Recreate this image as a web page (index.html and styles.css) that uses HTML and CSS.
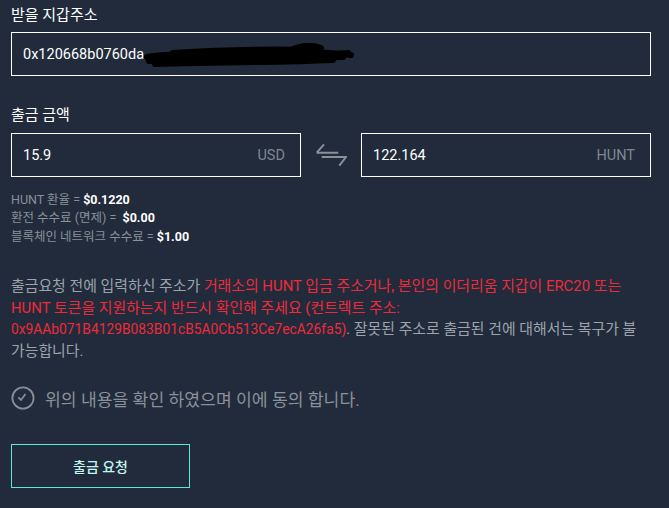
FILE: index.html
```html
<!DOCTYPE html>
<html lang="ko">
<head>
<meta charset="utf-8">
<link rel="stylesheet" href="styles.css">
</head>
<body>
<div class="page">
  <div class="label">받을 지갑주소</div>
  <div class="field wide">
    <span class="value">0x120668b0760da</span>
    <svg class="redact" width="215" height="26" viewBox="0 0 215 26">
      <path d="M4 14 C40 9, 80 11, 120 10 S180 8, 208 12 M6 18 C50 15, 110 17, 200 14 M12 21 C60 19, 120 20, 190 17 M30 10 C80 7,130 6,170 7 M150 6 C160 2, 170 2, 178 5 M20 16 C70 13, 140 14, 205 10" stroke="#000" stroke-width="6" fill="none" stroke-linecap="round"/>
    </svg>
  </div>

  <div class="label second">출금 금액</div>
  <div class="amounts">
    <div class="field half"><span class="value">15.9</span><span class="unit">USD</span></div>
    <svg class="swap" width="31" height="24" viewBox="0 0 31 24">
      <path d="M0.7 9.7 L8 1.3 M0.7 9.7 H22.3 M5.7 14 H30 L23.3 22.7" stroke="#8a9199" stroke-width="2" fill="none"/>
    </svg>
    <div class="field half"><span class="value">122.164</span><span class="unit">HUNT</span></div>
  </div>

  <div class="info">
    <div>HUNT 환율 = <b>$0.1220</b></div>
    <div>환전 수수료 (면제) =&nbsp; <b>$0.00</b></div>
    <div>블록체인 네트워크 수수료 = <b>$1.00</b></div>
  </div>

  <p class="warning">출금요청 전에 입력하신 주소가 <span class="red">거래소의 HUNT 입금 주소거나, 본인의 이더리움 지갑이 ERC20 또는<br>HUNT 토큰을 지원하는지 반드시 확인해 주세요 (컨트렉트 주소:<br><span class="addr">0x9AAb071B4129B083B01cB5A0Cb513Ce7ecA26fa5)</span></span>. 잘못된 주소로 출금된 건에 대해서는 복구가 불<br>가능합니다.</p>

  <div class="agree">
    <svg width="24" height="24" viewBox="0 0 24 24">
      <circle cx="12" cy="12" r="10.6" stroke="#868d96" stroke-width="1.8" fill="none"/>
      <path d="M7.3 11.3 L10 14 L14.5 8" stroke="#868d96" stroke-width="1.8" fill="none"/>
    </svg>
    <span>위의 내용을 확인 하였으며 이에 동의 합니다.</span>
  </div>

  <button class="submit">출금 요청</button>
</div>
</body>
</html>
```

FILE: styles.css
```css
html, body {
  margin: 0;
  background: #212b3c;
}
body {
  font-family: Roboto, "Noto Sans CJK KR", sans-serif;
  color: #fff;
}
.page {
  padding: 5px 11px 0 11px;
  width: 640px;
}
.label {
  font-size: 15px;
  line-height: 20px;
  height: 20px;
}
.label.second {
  margin-top: 29px;
}
.field {
  box-sizing: border-box;
  border: 1px solid #fff;
  height: 44px;
  display: flex;
  align-items: center;
  padding: 0 15px 0 11px;
  font-size: 14.5px;
}
.field.wide {
  margin-top: 7px;
  position: relative;
}
.redact {
  position: absolute;
  left: 131px;
  top: 10px;
}
.amounts {
  margin-top: 8px;
  display: flex;
  align-items: center;
  justify-content: space-between;
}
.field.half {
  width: 290px;
  justify-content: space-between;
}
.unit {
  color: #7f8790;
}
.info {
  margin-top: 13.6px;
  font-size: 12.5px;
  line-height: 18.7px;
  color: #8a9199;
}
.info b {
  color: #fff;
}
.warning {
  margin: 29.5px 0 0 0;
  font-size: 14.9px;
  line-height: 21.5px;
  color: #9ca3ab;
  white-space: nowrap;
}
.red {
  color: #ee2a3a;
}
.addr {
  font-size: 13.8px;
}
.agree {
  margin-top: 23.7px;
  display: flex;
  align-items: center;
  gap: 10px;
  color: #8a9199;
  font-size: 17.2px;
}
.agree svg {
  display: block;
}
.submit {
  margin-top: 33px;
  width: 179px;
  height: 44px;
  background: transparent;
  border: 1px solid #5ee8d8;
  color: #c4f6f0;
  font-family: Roboto, "Noto Sans CJK KR", sans-serif;
  font-size: 14px;
  font-weight: 500;
}
```
